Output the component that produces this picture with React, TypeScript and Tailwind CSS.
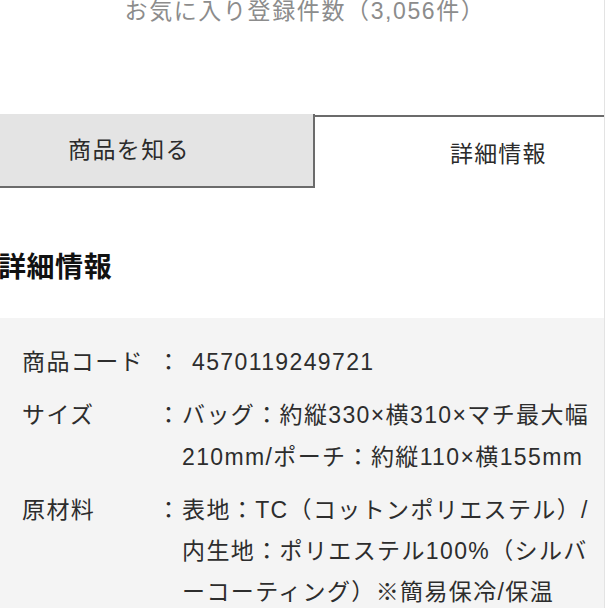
import React from "react";

const rows: { label: string; lines: string[]; pad?: boolean }[] = [
  { label: "商品コード", lines: ["4570119249721"], pad: true },
  {
    label: "サイズ",
    lines: ["バッグ：約縦330×横310×マチ最大幅", "210mm/ポーチ：約縦110×横155mm"],
  },
  {
    label: "原材料",
    lines: [
      "表地：TC（コットンポリエステル）/",
      "内生地：ポリエステル100%（シルバ",
      "ーコーティング）※簡易保冷/保温",
    ],
  },
];

export default function App() {
  return (
    <div
      className="w-[608px] h-[608px] overflow-hidden bg-white flex"
      style={{ fontFamily: '"Liberation Sans", "Noto Sans CJK JP", sans-serif' }}
    >
      <div className="w-[605px] h-[608px] overflow-hidden shrink-0 border-r border-[#e3e3e3] flex flex-col">
        <div className="shrink-0 h-[23px] leading-[23px] text-[23px] tracking-[0.07em] text-[#8c8c8c] text-center pl-[6px]">
          お気に入り登録件数（3,056件）
        </div>

        <div className="shrink-0 mt-[91px] flex h-[74px]">
          <div className="w-[315px] shrink-0 bg-[#e4e4e4] border-r-2 border-b-2 border-[#6b6b6b] flex items-center pl-[68px] text-[23px] tracking-[0.06em] text-[#2b2b2b]">
            商品を知る
          </div>
          <div className="flex-1 mt-[1px] border-t-2 border-[#6b6b6b] bg-white flex items-center pl-[135px] pt-[3px] text-[23px] tracking-[0.05em] text-[#2b2b2b]">
            詳細情報
          </div>
        </div>

        <div className="shrink-0 mt-[60px] -ml-[2px] h-[40px] leading-[40px] text-[28px] font-bold tracking-[0.02em] text-[#111]">
          詳細情報
        </div>

        <div className="shrink-0 mt-[30px] flex-1 bg-[#f4f4f4] pt-[23px] pl-[22px] flex flex-col gap-[11px] text-[23px] tracking-[0.06em] text-[#2d2d2d] leading-[42px]">
          {rows.map((r) => (
            <div key={r.label} className="flex shrink-0">
              <div className="w-[135px] shrink-0 whitespace-nowrap">{r.label}</div>
              <div className="w-[25px] shrink-0">：</div>
              <div className={"whitespace-nowrap " + (r.pad ? "pl-[10px]" : "")}>
                {r.lines.map((l, i) => (
                  <div key={i} className={r.label === "原材料" && i > 0 ? "-mt-[1px]" : ""}>
                    {l}
                  </div>
                ))}
              </div>
            </div>
          ))}
        </div>
      </div>
    </div>
  );
}
